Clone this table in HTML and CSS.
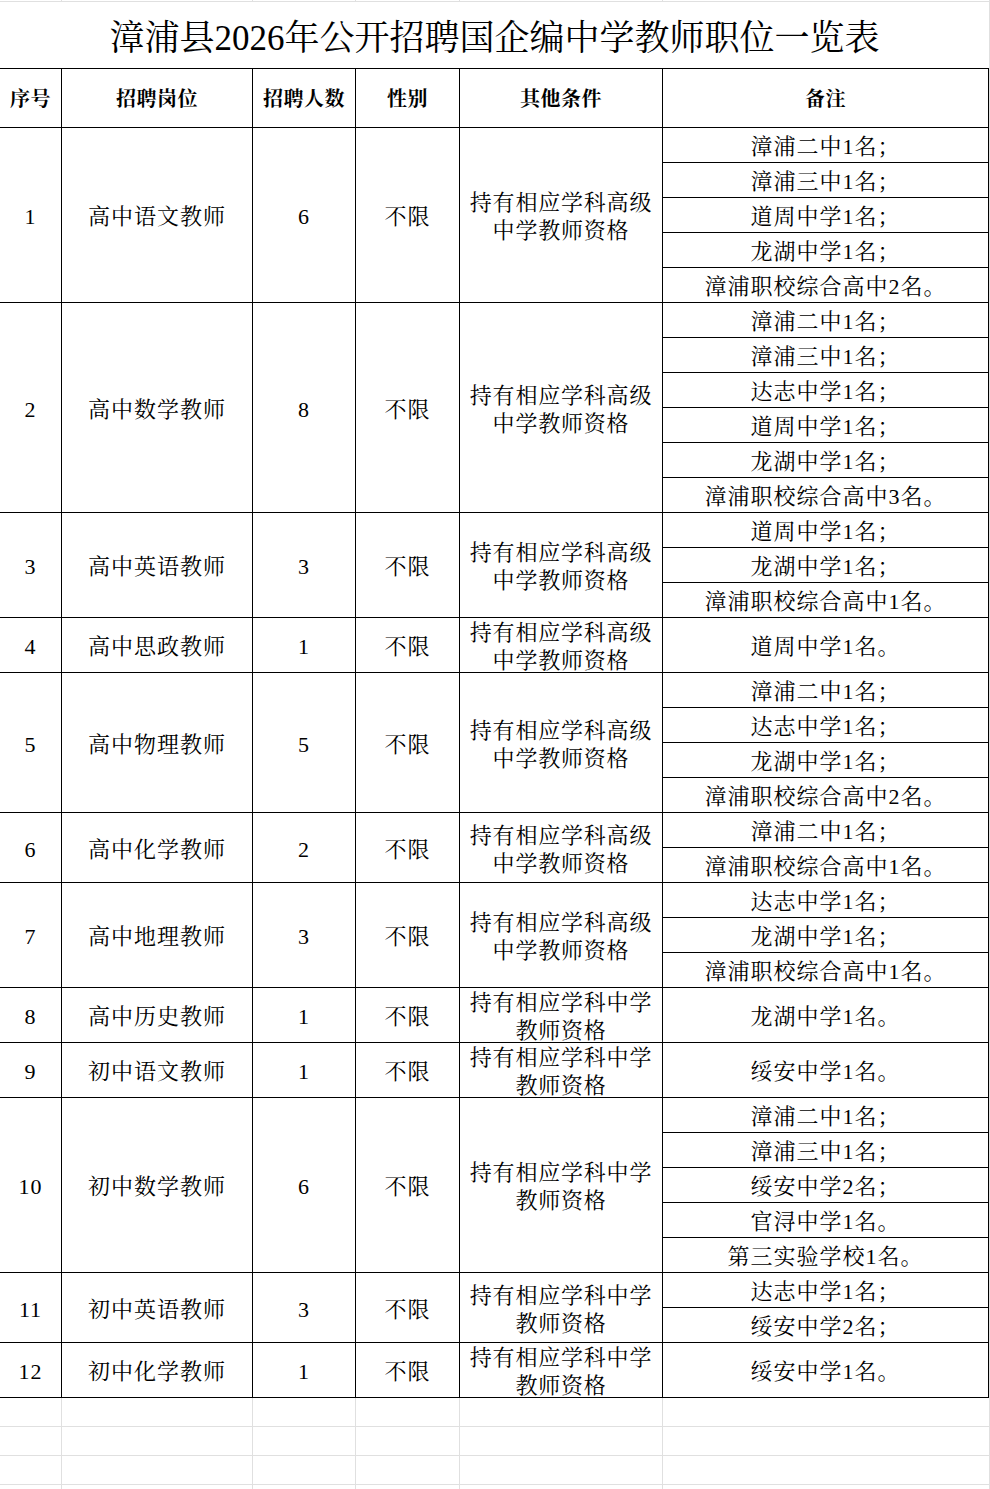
FILE: index.html
```html
<!DOCTYPE html>
<html lang="zh-CN">
<head>
<meta charset="utf-8">
<title>漳浦县2026年公开招聘国企编中学教师职位一览表</title>
<link rel="stylesheet" href="styles.css">
</head>
<body>
<div class="sheet">
  <div class="toprule">
    <div></div><div></div><div></div><div></div><div></div><div></div>
  </div>
  <div class="title">漳浦县2026年公开招聘国企编中学教师职位一览表</div>
  <div class="grid">
    <div class="c h">序号</div>
    <div class="c h">招聘岗位</div>
    <div class="c h">招聘人数</div>
    <div class="c h">性别</div>
    <div class="c h">其他条件</div>
    <div class="c h">备注</div>

    <div class="c s5">1</div>
    <div class="c s5">高中语文教师</div>
    <div class="c s5">6</div>
    <div class="c s5">不限</div>
    <div class="c s5 cond">持有相应学科高级<br>中学教师资格</div>
    <div class="c note">漳浦二中1名；</div>
    <div class="c note">漳浦三中1名；</div>
    <div class="c note">道周中学1名；</div>
    <div class="c note">龙湖中学1名；</div>
    <div class="c note">漳浦职校综合高中2名。</div>

    <div class="c s6">2</div>
    <div class="c s6">高中数学教师</div>
    <div class="c s6">8</div>
    <div class="c s6">不限</div>
    <div class="c s6 cond">持有相应学科高级<br>中学教师资格</div>
    <div class="c note">漳浦二中1名；</div>
    <div class="c note">漳浦三中1名；</div>
    <div class="c note">达志中学1名；</div>
    <div class="c note">道周中学1名；</div>
    <div class="c note">龙湖中学1名；</div>
    <div class="c note">漳浦职校综合高中3名。</div>

    <div class="c s3">3</div>
    <div class="c s3">高中英语教师</div>
    <div class="c s3">3</div>
    <div class="c s3">不限</div>
    <div class="c s3 cond">持有相应学科高级<br>中学教师资格</div>
    <div class="c note">道周中学1名；</div>
    <div class="c note">龙湖中学1名；</div>
    <div class="c note">漳浦职校综合高中1名。</div>

    <div class="c">4</div>
    <div class="c">高中思政教师</div>
    <div class="c">1</div>
    <div class="c">不限</div>
    <div class="c cond">持有相应学科高级<br>中学教师资格</div>
    <div class="c note">道周中学1名。</div>

    <div class="c s4">5</div>
    <div class="c s4">高中物理教师</div>
    <div class="c s4">5</div>
    <div class="c s4">不限</div>
    <div class="c s4 cond">持有相应学科高级<br>中学教师资格</div>
    <div class="c note">漳浦二中1名；</div>
    <div class="c note">达志中学1名；</div>
    <div class="c note">龙湖中学1名；</div>
    <div class="c note">漳浦职校综合高中2名。</div>

    <div class="c s2">6</div>
    <div class="c s2">高中化学教师</div>
    <div class="c s2">2</div>
    <div class="c s2">不限</div>
    <div class="c s2 cond">持有相应学科高级<br>中学教师资格</div>
    <div class="c note">漳浦二中1名；</div>
    <div class="c note">漳浦职校综合高中1名。</div>

    <div class="c s3">7</div>
    <div class="c s3">高中地理教师</div>
    <div class="c s3">3</div>
    <div class="c s3">不限</div>
    <div class="c s3 cond">持有相应学科高级<br>中学教师资格</div>
    <div class="c note">达志中学1名；</div>
    <div class="c note">龙湖中学1名；</div>
    <div class="c note">漳浦职校综合高中1名。</div>

    <div class="c">8</div>
    <div class="c">高中历史教师</div>
    <div class="c">1</div>
    <div class="c">不限</div>
    <div class="c cond">持有相应学科中学<br>教师资格</div>
    <div class="c note">龙湖中学1名。</div>

    <div class="c">9</div>
    <div class="c">初中语文教师</div>
    <div class="c">1</div>
    <div class="c">不限</div>
    <div class="c cond">持有相应学科中学<br>教师资格</div>
    <div class="c note">绥安中学1名。</div>

    <div class="c s5">10</div>
    <div class="c s5">初中数学教师</div>
    <div class="c s5">6</div>
    <div class="c s5">不限</div>
    <div class="c s5 cond">持有相应学科中学<br>教师资格</div>
    <div class="c note">漳浦二中1名；</div>
    <div class="c note">漳浦三中1名；</div>
    <div class="c note">绥安中学2名；</div>
    <div class="c note">官浔中学1名。</div>
    <div class="c note">第三实验学校1名。</div>

    <div class="c s2">11</div>
    <div class="c s2">初中英语教师</div>
    <div class="c s2">3</div>
    <div class="c s2">不限</div>
    <div class="c s2 cond">持有相应学科中学<br>教师资格</div>
    <div class="c note">达志中学1名；</div>
    <div class="c note">绥安中学2名；</div>

    <div class="c">12</div>
    <div class="c">初中化学教师</div>
    <div class="c">1</div>
    <div class="c">不限</div>
    <div class="c cond">持有相应学科中学<br>教师资格</div>
    <div class="c note">绥安中学1名。</div>
  </div>
  <div class="empty">
    <div></div><div></div><div></div><div></div><div></div><div></div>
    <div></div><div></div><div></div><div></div><div></div><div></div>
    <div></div><div></div><div></div><div></div><div></div><div></div>
    <div></div><div></div><div></div><div></div><div></div><div></div>
  </div>
</div>
</body>
</html>
```

FILE: styles.css
```css
html, body {
  margin: 0;
  padding: 0;
  background: #ffffff;
}

body {
  font-family: "Liberation Serif", "Noto Serif CJK SC", "Noto Sans CJK SC", serif;
  color: #000000;
  overflow: hidden;
}

.sheet {
  width: 990px;
  background: #e0e0e0;
}

.toprule {
  display: grid;
  grid-template-columns: 61px 190px 102px 103px 202px 326px;
  grid-template-rows: 1px;
  column-gap: 1px;
  padding: 0 1px 1px 0;
  width: 989px;
}

.toprule > div,
.empty > div {
  background: #ffffff;
}

.title {
  width: 989px;
  height: 66px;
  background: #ffffff;
  display: flex;
  align-items: center;
  justify-content: center;
  font-size: 35px;
  line-height: 40px;
  padding-top: 7px;
  box-sizing: border-box;
}

.grid {
  display: grid;
  width: 989px;
  box-sizing: border-box;
  grid-template-columns: 61px 190px 102px 103px 202px 325px;
  grid-template-rows: 58px repeat(14, 34px) 54px repeat(9, 34px) 54px 54px repeat(7, 34px) 54px;
  gap: 1px;
  padding: 1px 1px 1px 0;
  background: #000000;
}

.c {
  background: #ffffff;
  display: flex;
  align-items: center;
  justify-content: center;
  text-align: center;
  font-size: 22px;
  line-height: 28px;
  letter-spacing: 1px;
  padding-top: 4px;
  box-sizing: border-box;
  white-space: nowrap;
  min-width: 0;
  min-height: 0;
}

.h {
  font-size: 20px;
  font-weight: bold;
  letter-spacing: 0.5px;
  padding-top: 2px;
}

.cond {
  letter-spacing: 0.8px;
  padding-top: 4px;
}

.note {
  grid-column: 6;
  padding-top: 3px;
}

.s2 { grid-row: span 2; }
.s3 { grid-row: span 3; }
.s4 { grid-row: span 4; }
.s5 { grid-row: span 5; }
.s6 { grid-row: span 6; }

.empty {
  display: grid;
  grid-template-columns: 61px 190px 102px 103px 202px 326px;
  grid-template-rows: repeat(3, 28px) 4px;
  gap: 1px;
  padding-right: 1px;
  width: 990px;
  box-sizing: border-box;
}
```
